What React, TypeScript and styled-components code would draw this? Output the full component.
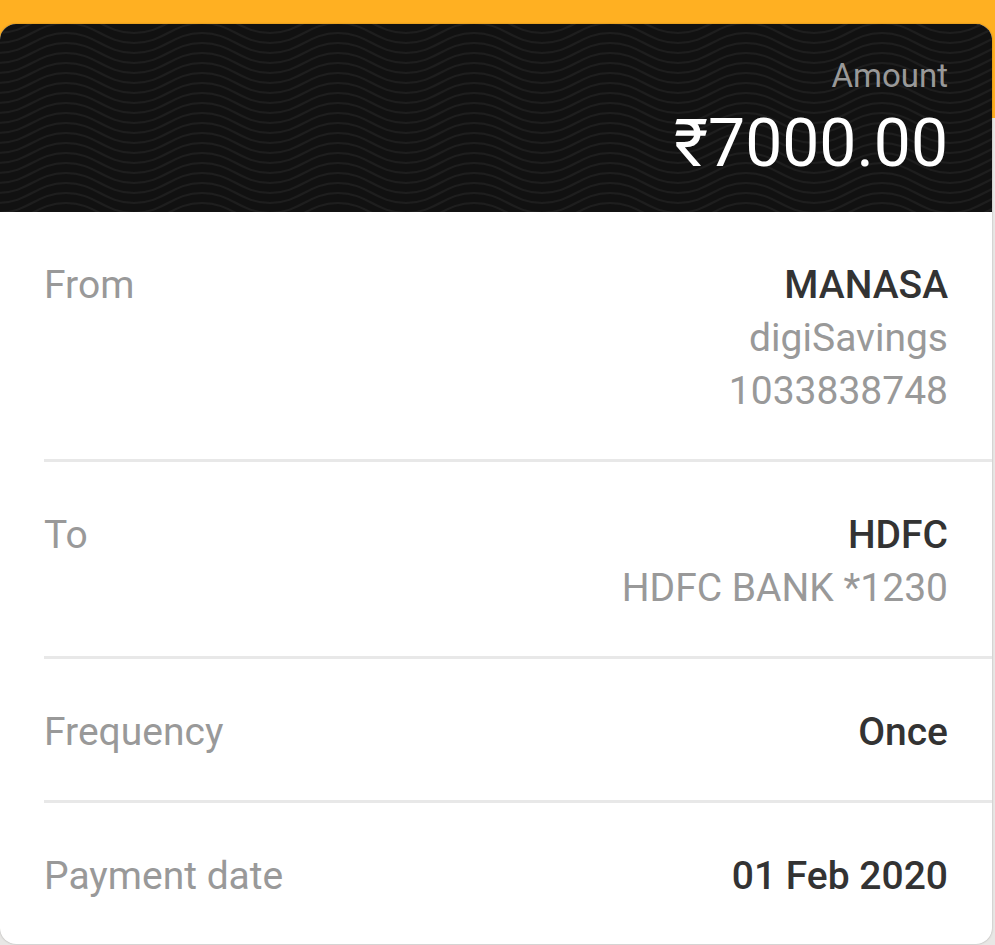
import React from "react";
import styled, { createGlobalStyle } from "styled-components";

const GlobalStyle = createGlobalStyle`
  *, *::before, *::after { box-sizing: border-box; }
  body {
    margin: 0;
    background: #e8e7e5;
    font-family: Roboto, "Noto Sans", sans-serif;
    color: #333;
  }
`;

const Page = styled.main`
  padding: 24px 3px 1px 0;
  background: linear-gradient(#ffb022, #ffb022) 0 0 / 100% 118px no-repeat;
`;

const Card = styled.article`
  border-radius: 16px;
  background: #fff;
  box-shadow: 0 0 2px rgba(0, 0, 0, 0.3);
  overflow: hidden;
`;

const Header = styled.header`
  position: relative;
  display: flex;
  flex-direction: column;
  align-items: flex-end;
  padding: 32px 44px 24px;
  background: #111;
`;

const Waves = styled.svg`
  position: absolute;
  inset: 0;
  width: 100%;
  height: 100%;
`;

const Caption = styled.span`
  position: relative;
  font-size: 33px;
  line-height: 40px;
  color: #999;
`;

const Amount = styled.strong`
  position: relative;
  margin-top: 4px;
  font-size: 66px;
  font-weight: 400;
  line-height: 88px;
  color: #fff;
`;

const Details = styled.dl`
  margin: 0;
  padding-left: 44px;
`;

const Row = styled.div`
  display: flex;
  justify-content: space-between;
  padding: 47px 44px 41px 0;
  font-size: 39px;
  line-height: 53px;
  border-bottom: 3px solid #e8e8e8;

  &:last-child {
    border-bottom: 0;
  }
`;

const Term = styled.dt`
  color: #999;
`;

const Value = styled.dd`
  display: flex;
  flex-direction: column;
  margin: 0;
  text-align: right;
`;

const Line = styled.span<{ $strong?: boolean }>`
  font-weight: ${(p) => (p.$strong ? 500 : 400)};
  color: ${(p) => (p.$strong ? "#333" : "#999")};
`;

const rows = [
  { term: "From", lines: ["MANASA", "digiSavings", "1033838748"] },
  { term: "To", lines: ["HDFC", "HDFC BANK *1230"] },
  { term: "Frequency", lines: ["Once"] },
  { term: "Payment date", lines: ["01 Feb 2020"] },
];

const wave = (y: number) =>
  `M0 ${y}C30 ${y} 38 ${y + 20} 68 ${y + 20}S106 ${y} 136 ${y}`;

export default function App() {
  return (
    <>
      <GlobalStyle />
      <Page>
        <Card>
          <Header>
            <Waves aria-hidden="true">
              <defs>
                <pattern
                  id="waves"
                  width="136"
                  height="10"
                  x="66"
                  y="4"
                  patternUnits="userSpaceOnUse"
                >
                  {[-15, -5, 5].map((y) => (
                    <path key={y} d={wave(y)} fill="none" stroke="#1e1e1e" strokeWidth="2" />
                  ))}
                </pattern>
              </defs>
              <rect width="100%" height="100%" fill="url(#waves)" />
            </Waves>
            <Caption>Amount</Caption>
            <Amount>₹7000.00</Amount>
          </Header>
          <Details>
            {rows.map(({ term, lines }) => (
              <Row key={term}>
                <Term>{term}</Term>
                <Value>
                  {lines.map((line, i) => (
                    <Line key={line} $strong={i === 0}>
                      {line}
                    </Line>
                  ))}
                </Value>
              </Row>
            ))}
          </Details>
        </Card>
      </Page>
    </>
  );
}
